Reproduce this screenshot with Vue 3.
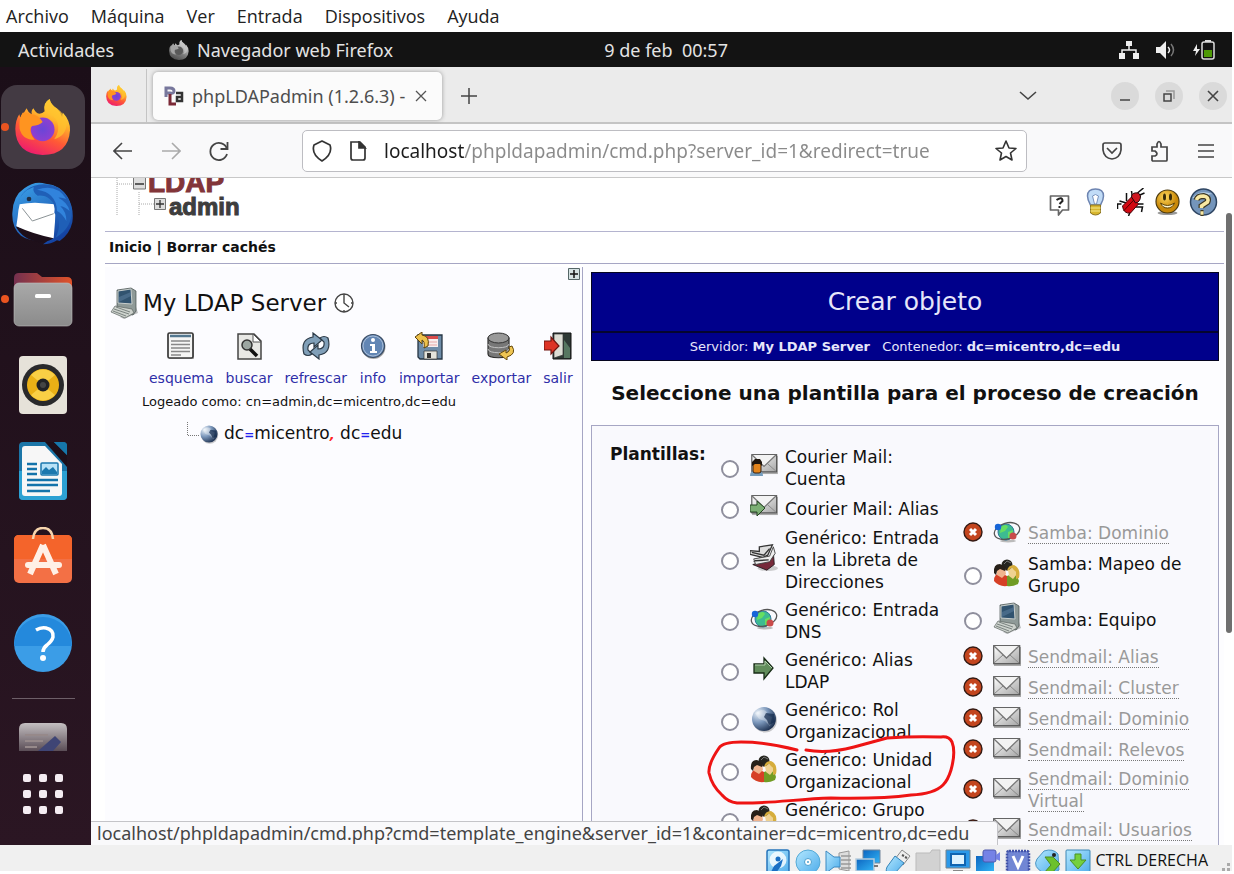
<script setup>
import { ref } from 'vue'

const menus = ['Archivo', 'Máquina', 'Ver', 'Entrada', 'Dispositivos', 'Ayuda']
const url = ref('localhost/phpldapadmin/cmd.php?server_id=1&redirect=true')

const dock = [
  { id: 'firefox', label: 'Firefox', active: true, running: true, size: 56 },
  { id: 'thunderbird', label: 'Thunderbird', size: 64 },
  { id: 'files', label: 'Archivos', running: true, size: 60 },
  { id: 'rhythmbox', label: 'Rhythmbox', size: 60 },
  { id: 'writer', label: 'Writer', size: 60 },
  { id: 'software', label: 'Software', size: 60 },
  { id: 'help', label: 'Ayuda', size: 60 }
]

const helpers = [
  { id: 'speech', label: 'Solicitar' },
  { id: 'bulb', label: 'Sugerencia' },
  { id: 'bug', label: 'Error' },
  { id: 'smile', label: 'Donar' },
  { id: 'question', label: 'Ayuda' }
]

const actions = [
  { id: 'schema', label: 'esquema' },
  { id: 'search', label: 'buscar' },
  { id: 'refresh', label: 'refrescar' },
  { id: 'info', label: 'info' },
  { id: 'import', label: 'importar' },
  { id: 'export', label: 'exportar' },
  { id: 'logout', label: 'salir' }
]

const leftTemplates = [
  { icon: 'mail-user', text: 'Courier Mail: Cuenta' },
  { icon: 'mail-arrow', text: 'Courier Mail: Alias' },
  { icon: 'book', text: 'Genérico: Entrada en la Libreta de Direcciones' },
  { icon: 'orbit', text: 'Genérico: Entrada DNS' },
  { icon: 'arrow', text: 'Genérico: Alias LDAP' },
  { icon: 'globe', text: 'Genérico: Rol Organizacional' },
  { icon: 'people', text: 'Genérico: Unidad Organizacional' },
  { icon: 'people', text: 'Genérico: Grupo', tall: true }
]

const rightTemplates = [
  { icon: 'orbit', text: 'Samba: Dominio', off: true },
  { icon: 'people', text: 'Samba: Mapeo de Grupo' },
  { icon: 'computer', text: 'Samba: Equipo' },
  { icon: 'mail', text: 'Sendmail: Alias', off: true },
  { icon: 'mail', text: 'Sendmail: Cluster', off: true },
  { icon: 'mail', text: 'Sendmail: Dominio', off: true },
  { icon: 'mail', text: 'Sendmail: Relevos', off: true },
  { icon: 'mail', text: 'Sendmail: Dominio Virtual', off: true },
  { icon: 'mail', text: 'Sendmail: Usuarios', off: true }
]

const devices = ['disk', 'cd', 'audio', 'network', 'usb', 'folder', 'display', 'record', 'cpu', 'mouse', 'keyboard']
</script>

<template>
  <div class="vm">
    <svg class="sprites" aria-hidden="true">
      <defs>
        <linearGradient id="g-fox" x1="0.8" y1="0" x2="0.35" y2="1">
          <stop offset="0" stop-color="#fff04a" /><stop offset="0.35" stop-color="#ffb52b" />
          <stop offset="0.65" stop-color="#ff5a35" /><stop offset="1" stop-color="#ee1d6d" />
        </linearGradient>
        <radialGradient id="g-purple"><stop offset="0" stop-color="#6a45d8" /><stop offset="1" stop-color="#8f3fd0" /></radialGradient>
        <linearGradient id="g-bird" x1="0" y1="0" x2="0.6" y2="1"><stop offset="0" stop-color="#3ea8ee" /><stop offset="1" stop-color="#1443a2" /></linearGradient>
        <linearGradient id="g-grey" x1="0" y1="0" x2="0" y2="1"><stop offset="0" stop-color="#a9a9a9" /><stop offset="1" stop-color="#8b8b8b" /></linearGradient>
        <linearGradient id="g-folder"><stop offset="0" stop-color="#74304f" /><stop offset="1" stop-color="#e0532a" /></linearGradient>
        <linearGradient id="g-fade" x1="0" y1="0" x2="0" y2="1"><stop offset="0" stop-color="#c4bfc1" /><stop offset="1" stop-color="#5a4d56" /></linearGradient>
        <linearGradient id="g-env" x1="0" y1="0" x2="1" y2="1"><stop offset="0" stop-color="#ffffff" /><stop offset="1" stop-color="#a5a5a5" /></linearGradient>
        <radialGradient id="g-globe" cx="0.25" cy="0.25" r="0.9"><stop offset="0" stop-color="#eef4fa" /><stop offset="0.45" stop-color="#7b97bb" /><stop offset="1" stop-color="#0f2140" /></radialGradient>
        <radialGradient id="g-smile" cx="0.4" cy="0.3"><stop offset="0" stop-color="#ffd85c" /><stop offset="1" stop-color="#c98909" /></radialGradient>
        <linearGradient id="g-blue" x1="0" y1="0" x2="1" y2="1"><stop offset="0" stop-color="#b4e8ff" /><stop offset="1" stop-color="#4cabea" /></linearGradient>
        <linearGradient id="g-deep" x1="0" y1="0" x2="1" y2="1"><stop offset="0" stop-color="#0d65c0" /><stop offset="1" stop-color="#32b4f5" /></linearGradient>
      </defs>

      <symbol id="firefox" viewBox="0 0 168 170">
        <path fill="url(#g-fox)" d="M27 40l7-12q4 12 16 19q-3-12 5-19q6 14 18 17q10-2 16-8q-6-25 15-37q4 18 22 29q12 10 16 26l2-14q23 25 22 54q-5 75-83 75Q1 166 0 91Q1 62 12 46l3 10q4-9 12-16z" />
        <circle cx="83" cy="92" r="36" fill="url(#g-purple)" />
        <path fill="#ff9420" d="M22 42q14-4 27 4q20 0 34 24q-10 10-32 12q-8 6-4 20q2 12 12 22q-38 0-46-34Q10 62 22 42z" />
        <path fill="#ffc22d" d="M90 38q26 6 38 34q8 26-10 50q36-10 38-48q-6-30-30-46q-18-10-22-28q-20 14-14 38z" opacity=".75" />
      </symbol>
      <symbol id="thunderbird" viewBox="0 0 192 192">
        <path fill="url(#g-bird)" d="M40 22Q70-2 104 8q44 4 66 40q20 34 14 76q-8 36-38 56l-8-2q-18 12-42 12l14-10Q54 182 30 164Q2 140 4 96Q6 44 40 22z" />
        <path fill="#1d0f1a" d="M14 136l114 34q-12 12-30 10l-12 4Q34 176 14 136z" />
        <path fill="#fff" d="M26 70q22-4 46-5l60 5q2 26 0 52l-4 50q-60-12-112-36l4-28q2-24 6-38z" />
        <path d="M34 82l30 38 64-22" fill="none" stroke="#8b9396" stroke-width="3" />
        <path fill="#1f5fb7" d="M20 66q12-36 48-48q-4 16 12 26q22-2 36 10q18 14 14 42q26 26 4 74q52-30 48-88Q164 8 96 10Q40 12 20 66z" />
        <path fill="#3183dc" d="M78 26q58-20 88 28q-16-6-24-4q28 14 34 40q-16-14-28-14q18 16 18 44q-12-22-28-30Q136 34 78 26z" />
        <circle cx="54" cy="54" r="7" fill="#203047" />
      </symbol>
      <symbol id="files" viewBox="0 0 60 60">
        <path fill="url(#g-folder)" d="M1 9q0-5 5-5h18l5 4h25q5 0 5 5v18H1z" />
        <rect x="1" y="14" width="58" height="43" rx="5" fill="url(#g-grey)" stroke="#c0c0c0" stroke-width=".6" />
        <rect x="22" y="25" width="16" height="4" rx="1.5" fill="#fff" />
      </symbol>
      <symbol id="rhythmbox" viewBox="0 0 60 60">
        <rect x="6" y="1" width="48" height="58" rx="4" fill="#e6e2d9" />
        <circle cx="30" cy="30" r="21" fill="#29292b" /><circle cx="30" cy="30" r="16" fill="#eab016" />
        <path d="M30 30L18 20a16 16 0 0 1 24 0zM30 30l12 10a16 16 0 0 1-24 0z" fill="#f9cf45" />
        <circle cx="30" cy="30" r="6.500" fill="#222225" /><circle cx="30" cy="30" r="3" fill="#444" />
      </symbol>
      <symbol id="writer" viewBox="0 0 60 60">
        <path fill="#1b76a8" d="M10 1h40q4 0 4 4v50q0 4-4 4H10q-4 0-4-4V5q0-4 4-4z" />
        <path fill="#2ca1d3" d="M6 30h48v25q0 4-4 4H10q-4 0-4-4z" />
        <path fill="#f7f7f7" d="M12 5h20l17 18v29q0 3-3 3H12q-3 0-3-3V8q0-3 3-3z" />
        <path fill="#1e0f19" d="M32 1h9l13 13v12z" /><path fill="#1677aa" d="M41 1h9q4 0 4 4v9z" />
        <path d="M14 23h10M14 28h10M14 33h10M14 39h31M14 44h31M14 50h23" stroke="#1473aa" stroke-width="2.500" />
        <rect x="28" y="22" width="17" height="12" rx="1" fill="#b8e2f7" stroke="#1b78ae" stroke-width="1.500" />
        <path fill="#1c78ae" d="M29 33v-3l4-4 3 3 4-3 4 5v2z" />
      </symbol>
      <symbol id="software" viewBox="0 0 60 60">
        <rect x="1" y="8" width="58" height="48" rx="5" fill="#f37045" /><path d="M1 32V13q0-5 5-5h48q5 0 5 5v19z" fill="#f4642b" />
        <path d="M20 12Q21 1 30 1t10 11" fill="none" stroke="#f6d4ad" stroke-width="2.500" />
        <path d="M30 18L17 47M30 18l13 29" stroke="#fff0e6" stroke-width="6" fill="none" /><path d="M15 38h31" stroke="#fff0e6" stroke-width="6" stroke-linecap="round" />
      </symbol>
      <symbol id="help" viewBox="0 0 60 60">
        <circle cx="30" cy="30" r="29" fill="#3b9de7" /><path d="M1 33a29 29 0 0 1 58 0z" fill="#2489dc" />
        <path d="M23 17q5-3 10-2 8 2 7 9-1 4-6 8-4 3-4 7" fill="none" stroke="#fff" stroke-width="3.500" /><circle cx="30" cy="45" r="3" fill="#fff" />
      </symbol>

      <symbol id="computer" viewBox="0 0 28 32">
        <path fill="#2a3130" opacity=".3" d="M10 30l16-6v-4l2 6-14 6z" />
        <path fill="#8f9a98" stroke="#444d4c" stroke-width=".7" d="M7 3l14-2 5 3v20l-3 4-16-7z" />
        <path fill="#31536f" stroke="#c8cecc" d="M8 4l13-2 1 15-14-1z" /><path d="M9 10l12-5v4L9 15z" fill="#58799a" opacity=".6" />
        <path fill="#cdd2cd" stroke="#5b6461" stroke-width=".7" d="M5 19l17 3 2 4-9 5-14-6z" />
        <path d="M4 22l15 5M6 20l14 5M3 24l13 5" stroke="#7b8481" />
      </symbol>
      <symbol id="schema" viewBox="0 0 28 28">
        <rect x="2" y="2" width="25" height="25" fill="#bbb" /><rect x="1" y="1" width="25" height="25" rx="1.500" fill="#f5f5f4" stroke="#383838" stroke-width="1.700" />
        <path d="M3 4h21" stroke="#527790" stroke-width="2.500" /><path d="M4 9h19M4 12.500h19M4 16h19M4 19.500h19M4 23h10" stroke="#888" stroke-width="1.500" />
      </symbol>
      <symbol id="search" viewBox="0 0 28 28">
        <path d="M3 2h16l7 7v18H3z" fill="#e8e8e5" stroke="#444" stroke-width="1.500" /><path d="M18 2v8h8z" fill="#fff" stroke="#555" />
        <path d="M14 16l8 8" stroke="#111" stroke-width="3.500" /><circle cx="12" cy="13" r="5" fill="#9ca6a1" stroke="#333" stroke-width="1.500" />
      </symbol>
      <symbol id="refresh" viewBox="0 0 28 28">
        <path id="swirl" fill="#809fb8" stroke="#2c3b48" stroke-width="1.200" d="M2 22Q-2 7 11 5V1l9 7-8 7v-4q-7 0-6 7l4 4q-4 3-8 0z" />
        <use href="#swirl" transform="rotate(180 14 14)" />
      </symbol>
      <symbol id="info" viewBox="0 0 28 28">
        <circle cx="14.500" cy="15" r="12" fill="#aaa" /><circle cx="14" cy="14" r="11.500" fill="#6286b4" stroke="#3b4c63" stroke-width="1.200" /><circle cx="14" cy="14" r="10" fill="none" stroke="#a9bdd7" />
        <circle cx="14" cy="8" r="2" fill="#fff" /><path d="M11 12h5v7h2v2h-7v-2h2v-5h-2z" fill="#fff" />
      </symbol>
      <symbol id="import" viewBox="0 0 28 28">
        <path fill="#6e8ca8" stroke="#253443" stroke-width="1.300" d="M3 3h24v24H5l-2-2z" /><path fill="#f7eeee" d="M8 4h15v11H8z" /><path fill="#d94c4c" d="M8 4h15v3H8z" /><path d="M9 10h13M9 13h13" stroke="#e6a7a7" />
        <path d="M9 19h13v8H9z" fill="#e4e4dc" stroke="#333" stroke-width=".7" /><path d="M12 21h4v5h-4z" fill="#333" />
        <path fill="#edc14b" stroke="#5b420e" d="M0 5l7-5v3q8 1 6 11l-4 2q1-7-2-8v4z" />
      </symbol>
      <symbol id="export" viewBox="0 0 28 28">
        <path fill="#777" stroke="#2d2d2d" stroke-width="1.200" d="M1 6v16c0 5 21 5 21 0V6z" /><ellipse cx="11.500" cy="6" rx="10.500" ry="5" fill="#999" stroke="#333" />
        <path d="M1 12c0 5 21 5 21 0M1 17c0 5 21 5 21 0" fill="none" stroke="#c2c2c2" />
        <path fill="#efc553" stroke="#664a0e" d="M25 14q5 8-5 11v3l-8-6 7-4v3q5-2 3-6z" />
      </symbol>
      <symbol id="logout" viewBox="0 0 28 28">
        <path fill="#2e3935" stroke="#111" d="M9 1h18v26H9z" /><path fill="#dcddd4" stroke="#333" stroke-width=".7" d="M10 2h9v21l-9 3z" /><path d="M20 8l6 8v10h-6z" fill="#567660" />
        <path fill="#dd3426" stroke="#701510" stroke-width="1.200" d="M0 9h7V5l8 9-8 8v-4H0z" />
      </symbol>

      <symbol id="globe" viewBox="0 0 28 28"><circle cx="15" cy="15.500" r="12" fill="#000" opacity=".2" /><circle cx="14" cy="14" r="12" fill="url(#g-globe)" /><path d="M11 5q7 0 6 5l5 2-2 9-5-5-6-2-4-6z" fill="#fff" opacity=".3" /><path d="M16 8l8 1 1 8-6 3-2-5-3-3z" fill="#13294b" opacity=".7" /></symbol>
      <symbol id="mail" viewBox="0 0 28 22"><rect x="1" y="2" width="27" height="19" fill="#aaa" /><rect x=".7" y=".7" width="26" height="18" fill="url(#g-env)" stroke="#555" stroke-width="1.200" /><path d="M1 18l9-8M26 18l-9-8" stroke="#888" /><path d="M1 1l12.500 12L26 1" fill="#f3f3f3" stroke="#777" stroke-width="1.300" /></symbol>
      <symbol id="mail-user" viewBox="0 0 28 24"><use href="#mail" x="1" width="27" height="21" /><path d="M0 22q0-5 4-5h5q4 0 4 5z" fill="#739cbd" /><rect x="3" y="8" width="8" height="11" rx="2" fill="#e2841c" stroke="#3a2415" /><path d="M2 12V8l3-3h5l2 3v4l-2-2H5z" fill="#20170f" /></symbol>
      <symbol id="mail-arrow" viewBox="0 0 28 24"><use href="#mail" x="1" width="27" height="21" /><path d="M0 10h7V6l8 7-8 8v-4H0z" fill="#7caf74" stroke="#244522" /></symbol>
      <symbol id="arrow" viewBox="0 0 28 28"><path d="M4 9h10V3l9 10-9 11v-6H4z" fill="#618c5b" stroke="#172b16" stroke-width="1.300" /><path d="M5 10h10V6l7 7" fill="none" stroke="#b1ceac" /></symbol>
      <symbol id="orbit" viewBox="0 0 28 24"><ellipse cx="15" cy="21" rx="8" ry="1.500" fill="#bbb" /><circle cx="13" cy="12" r="8" fill="#3dbb91" stroke="#317a9c" /><path d="M8 7q5-4 7 0l-3 4-5 2zM15 12l5-2-1 7-4 2z" fill="#67de61" /><ellipse cx="14" cy="11" rx="13" ry="8" fill="none" stroke="#555" stroke-width="1.300" transform="rotate(-16 14 11)" /><circle cx="5" cy="7" r="3.200" fill="#1665d8" /><circle cx="20" cy="16" r="3.500" fill="#c94a4a" /></symbol>
      <symbol id="people" viewBox="0 0 28 28">
        <circle cx="14" cy="6" r="5.500" fill="#25251f" /><path d="M11 5l3-3 4 2" fill="none" stroke="#777" />
        <path d="M1 22q0-8 7-8l6 3v10q-8 1-13-5z" fill="#d64026" /><path d="M14 27V17q10-5 12 5l-1 3q-6 3-11 2z" fill="#719c24" />
        <path d="M3 9h9l1 6-4 4-5-3z" fill="#f0b48e" /><path d="M15 11l6-2 3 6-4 5-4-3z" fill="#efd291" />
        <path d="M1 14Q0 5 7 5l6 3-1 4-5-2-3 2-1 4z" fill="#272018" /><path d="M14 12q1-6 7-6 7 3 5 13l-3 1 0-7-4-4z" fill="#d6ad3c" />
      </symbol>
      <symbol id="book" viewBox="0 0 30 28"><ellipse cx="19" cy="25" rx="11" ry="3" fill="#aaa" opacity=".6" /><path d="M3 21l15-4 7-9 1 13-8 6z" fill="#76293a" stroke="#261b20" /><path d="M10 2l14-2-5 11-15 7 8-5-12-3V6l10 1z" fill="#ddd" stroke="#333" stroke-width="1.400" /><path d="M4 15l17-3 4-10 2 7-6 9-15 3z" fill="#eee" stroke="#444" /><path d="M2 8l13 3 6-7M5 17l15-1" fill="none" stroke="#333" stroke-width="1.500" /></symbol>
      <symbol id="off" viewBox="0 0 20 20"><circle cx="10" cy="10" r="9" fill="#c3451e" stroke="#341a13" stroke-width="1.400" /><path d="M7 7l6 6M13 7l-6 6" stroke="#fff" stroke-width="3" /></symbol>

      <symbol id="speech" viewBox="0 0 28 28"><path d="M5 8h18v14h-6l-4 5v-5H5z" fill="#fff" stroke="#666" stroke-width="1.700" stroke-linejoin="round" /><path d="M11 12q6-4 6 1-2 2-3 3" fill="none" stroke="#222" stroke-width="2" /><path d="M13 19h2" stroke="#222" stroke-width="2" /></symbol>
      <symbol id="bulb" viewBox="0 0 28 28"><path d="M9 17Q6 12 6 8q0-7 8-7t8 7q0 4-3 9z" fill="#c1dcf7" stroke="#6d84b1" stroke-width="1.500" /><path d="M11 8q3-3 6 0l-2 8h-2z" fill="#fff" stroke="#7993bd" /><path d="M9 17h10v8q-5 4-10 0z" fill="#d8b62e" stroke="#8c7420" /><path d="M9 20h10M9 23h10" stroke="#f5ea8c" /></symbol>
      <symbol id="bug" viewBox="0 0 28 28"><path d="M2 13l7 2M9 5v8M14 3l1 7M20 5l6-5M20 8l7-3M20 16h6M18 19h7l-1 5M4 16H0v5M13 23l-2 5" stroke="#111" stroke-width="1.500" fill="none" /><path d="M5 18l9-9 7 7-8 9q-7 1-8-7z" fill="#d20812" stroke="#470207" /><path d="M6 23l14-15" stroke="#500" /><path d="M14 9q0-5 7-4l2 3q0 6-5 7z" fill="#cf1720" stroke="#22090b" /></symbol>
      <symbol id="smile" viewBox="0 0 28 28"><ellipse cx="14" cy="25" rx="10" ry="2" fill="#999" /><circle cx="14" cy="13.500" r="11.500" fill="url(#g-smile)" stroke="#4b3a10" stroke-width="1.200" /><ellipse cx="11" cy="9" rx="1.500" ry="3.500" fill="#382b09" /><ellipse cx="17" cy="9" rx="1.500" ry="3.500" fill="#382b09" /><path d="M7 15q7 5 14 0-2 5-7 5t-7-5z" fill="#fff6cd" stroke="#5c4308" /></symbol>
      <symbol id="question" viewBox="0 0 28 28"><circle cx="14" cy="14" r="13" fill="#7495bb" stroke="#2e4562" stroke-width="1.500" /><path d="M3 10Q10 1 23 6q-6 0-9 5z" fill="#bdd4ea" /><path d="M7 12q1-4 7-4 6 1 4 6l-6 4v2M11 25h3" fill="none" stroke="#3c3620" stroke-width="6" /><path d="M7 12q1-4 7-4 6 1 4 6l-6 4v2M11 25h3" fill="none" stroke="#f9e9a3" stroke-width="3.500" /></symbol>

      <symbol id="disk" viewBox="0 0 26 26"><rect x="2" y="1" width="22" height="25" rx="2" fill="url(#g-blue)" stroke="#2574bb" stroke-width="1.500" /><circle cx="13" cy="11" r="8.500" fill="#fff" opacity=".8" /><circle cx="13" cy="10" r="2.500" fill="#1a6fc4" /><path d="M18 10l-2 7-5 7-5-1 3-6z" fill="#1a6fc4" /></symbol>
      <symbol id="cd" viewBox="0 0 26 26"><circle cx="13" cy="13" r="12" fill="url(#g-blue)" stroke="#55aad6" /><circle cx="13" cy="13" r="3.500" fill="#fff" stroke="#4ca0cf" /><circle cx="13" cy="13" r="1" fill="#4ca0cf" /></symbol>
      <symbol id="audio" viewBox="0 0 26 26"><path d="M14 4l10-2v20l-10-2z" fill="#ddd" stroke="#999" /><path d="M16 7h10M16 11h10M16 15h10M16 19h10" stroke="#999" stroke-width="1.500" /><path d="M1 2l8 6h6v10H9l-8 6z" fill="url(#g-blue)" stroke="#3a88c0" /></symbol>
      <symbol id="network" viewBox="0 0 26 26"><path d="M8 1h17v13H8z" fill="url(#g-deep)" stroke="#72869c" /><path d="M1 10h18v12H1z" fill="url(#g-deep)" stroke="#b7ccdc" stroke-width="1.500" /><path d="M6 25h9M19 17h4" stroke="#777" stroke-width="2" /></symbol>
      <symbol id="usb" viewBox="0 0 26 26"><path d="M17 1l8 6-7 9-8-6z" fill="#eee" stroke="#888" /><path d="M17 6l2 1M20 8l2 1" stroke="#555" stroke-width="2" /><path d="M10 7l9 7-9 10q-3 3-7 1-3-2-1-7z" fill="url(#g-blue)" stroke="#3484b9" /></symbol>
      <symbol id="folder" viewBox="0 0 26 26"><path d="M1 4h14l2-3h8v22H1z" fill="#d2d2d2" stroke="#bbb" /></symbol>
      <symbol id="display" viewBox="0 0 26 26"><path d="M1 1h24v18H1z" fill="#2b99e9" stroke="#76848e" /><path d="M6 5h14v11H6z" fill="#ddf3ff" stroke="#1065b1" stroke-width="2" /><path d="M8 22h10M5 25h16" stroke="#888" stroke-width="2" /></symbol>
      <symbol id="record" viewBox="0 0 26 26"><path d="M1 7h18v15H1z" fill="url(#g-deep)" /><rect x="8" y="1" width="13" height="12" rx="2" fill="#7582e6" stroke="#4e59ad" /><path d="M21 6l4-3v9l-4-2z" fill="#7582e6" /><path d="M5 25h12" stroke="#777" stroke-width="2" /></symbol>
      <symbol id="cpu" viewBox="0 0 26 26"><rect x="2" y="2" width="22" height="22" rx="2" fill="#7186d4" stroke="#4051a6" stroke-width="2.500" stroke-dasharray="2 1" /><path d="M8 7l5 11 5-11" fill="none" stroke="#fff" stroke-width="3" /></symbol>
      <symbol id="mouse" viewBox="0 0 26 26"><path d="M9 2q9-3 14 3l1 16q-8 6-15 3Q-3 18 2 10z" fill="url(#g-blue)" stroke="#4e96c4" /><path d="M10 8h8l7 7-8 9h-8l7-8z" fill="#6cc12c" stroke="#4b8c24" /><circle cx="19" cy="6" r="2" fill="#222" /></symbol>
      <symbol id="keyboard" viewBox="0 0 26 26"><rect x="1" y="1" width="24" height="24" rx="1" fill="url(#g-blue)" stroke="#3d86b5" /><path d="M10 5h6v6h5l-8 9-8-9h5z" fill="#75d03d" stroke="#489025" /></symbol>
    </svg>

    <nav class="host-menu">
      <button v-for="m in menus" :key="m" type="button">{{ m }}</button>
    </nav>

    <div class="guest">
      <header class="topbar">
        <div class="top-left">
          <button type="button">Actividades</button>
          <button type="button" class="app-name">
            <svg class="tiny-fox" width="20" height="20"><use href="#firefox" /></svg>Navegador web Firefox
          </button>
        </div>
        <button type="button" class="clock">9 de feb&nbsp; 00:57</button>
        <div class="tray">
          <svg width="20" height="18" viewBox="0 0 20 18" fill="#eee"><path d="M7 0h6v5H7zM0 12h6v6H0zM14 12h6v6h-6z" /><path d="M10 5v4M3 13V9h14v4" fill="none" stroke="#eee" stroke-width="1.500" /></svg>
          <svg width="20" height="18" viewBox="0 0 20 18"><path d="M0 6h4l6-6v18l-6-6H0z" fill="#eee" /><path d="M12 6q3 3 0 6" fill="none" stroke="#eee" stroke-width="1.500" /><path d="M15 3q5 6 0 12" fill="none" stroke="#777" stroke-width="1.500" /></svg>
          <svg width="22" height="20" viewBox="0 0 22 20"><path d="M4 4L0 11h3l-1 5 5-7H4z" fill="#eee" /><rect x="9" y="2" width="12" height="17" rx="2" fill="none" stroke="#ddd" stroke-width="1.500" /><path d="M12 1h6" stroke="#ddd" stroke-width="2" /><path d="M11 10h8v7h-8z" fill="#4e9a06" /></svg>
        </div>
      </header>

      <div class="desktop">
        <aside class="dock">
          <button v-for="d in dock" :key="d.id" type="button" class="dock-item" :class="{ active: d.active, running: d.running }" :aria-label="d.label">
            <svg :width="d.size" :height="d.size"><use :href="'#' + d.id" /></svg>
          </button>
          <hr />
          <button type="button" class="dock-cut" aria-label="Editor de texto">
            <svg width="48" height="28" viewBox="0 0 48 28"><path d="M0 28V6q0-6 6-6h36q6 0 6 6v22z" fill="url(#g-fade)" /><path d="M6 12h23M6 18h18M6 24h12" stroke="#96898a" stroke-width="2" /><path d="M19 28l17-15 6 6-8 9z" fill="#3f4575" /></svg>
          </button>
          <button type="button" class="dock-grid" aria-label="Mostrar aplicaciones"><i v-for="n in 9" :key="n"></i></button>
        </aside>

        <div class="browser">
          <div class="tabs">
            <button type="button" class="pinned" aria-label="Firefox"><svg width="21" height="21"><use href="#firefox" /></svg></button>
            <div class="tab">
              <svg width="20" height="20" viewBox="0 0 20 20" fill="none" stroke-width="3"><path d="M2 11V2h4q4 0 4 3T6 7H3" stroke="#77779c" /><path d="M6 8v10h6" stroke="#7b2936" /><path d="M12 7h6v8h-5v-4h5" stroke="#333" stroke-width="2.500" /></svg>
              <span class="tab-title">phpLDAPadmin (1.2.6.3) -</span>
              <button type="button" aria-label="Cerrar pestaña"><svg width="12" height="12" viewBox="0 0 12 12" stroke="#555" stroke-width="1.300"><path d="M1 1l10 10M11 1L1 11" /></svg></button>
            </div>
            <button type="button" class="plus" aria-label="Nueva pestaña"><svg width="16" height="16" viewBox="0 0 16 16" stroke="#444" stroke-width="1.500"><path d="M8 0v16M0 8h16" /></svg></button>
            <div class="win">
              <button type="button" class="all-tabs" aria-label="Listar pestañas"><svg width="18" height="10" viewBox="0 0 18 10" fill="none" stroke="#444" stroke-width="1.600"><path d="M1 1l8 7 8-7" /></svg></button>
              <button type="button" class="round" aria-label="Minimizar"><svg width="12" height="12" viewBox="0 0 12 12"><path d="M1 10h10" stroke="#444" stroke-width="1.500" /></svg></button>
              <button type="button" class="round" aria-label="Restaurar"><svg width="12" height="12" viewBox="0 0 12 12" fill="none" stroke="#444" stroke-width="1.500"><path d="M1 4h7v7H1z" /><path d="M3 1h8v8" stroke="#999" /></svg></button>
              <button type="button" class="round" aria-label="Cerrar"><svg width="12" height="12" viewBox="0 0 12 12" stroke="#444" stroke-width="1.600"><path d="M1 1l10 10M11 1L1 11" /></svg></button>
            </div>
          </div>

          <div class="toolbar">
            <div class="nav">
              <button type="button" aria-label="Atrás"><svg width="20" height="18" viewBox="0 0 20 18" fill="none" stroke="#444" stroke-width="1.600"><path d="M19 9H1M9 1L1 9l8 8" /></svg></button>
              <button type="button" aria-label="Adelante"><svg width="20" height="18" viewBox="0 0 20 18" fill="none" stroke="#aaa" stroke-width="1.600"><path d="M1 9h18M11 1l8 8-8 8" /></svg></button>
              <button type="button" aria-label="Recargar"><svg width="20" height="20" viewBox="0 0 20 20" fill="none" stroke="#444" stroke-width="1.800"><path d="M18 8a8.500 8.500 0 1 0 0 5" /><path d="M18.500 1v7h-7" /></svg></button>
            </div>
            <div class="urlbar">
              <svg width="20" height="22" viewBox="0 0 20 22" fill="none" stroke="#333" stroke-width="1.700"><path d="M10 1l8 4q3 9-8 16Q-1 14 2 5z" stroke-linejoin="round" /></svg>
              <svg width="18" height="20" viewBox="0 0 18 20" fill="none" stroke="#333" stroke-width="1.700"><path d="M2 1h9l5 5v11q0 2-2 2H4q-2 0-2-2z" /><path d="M10 1v6h6z" fill="#333" /></svg>
              <input v-model="url" type="text" aria-label="Dirección" />
              <button type="button" aria-label="Añadir a marcadores"><svg width="22" height="22" viewBox="0 0 22 22" fill="none" stroke="#333" stroke-width="1.600" stroke-linejoin="round"><path d="M11 1l3 7 7 .5-5.500 4.500L17 20l-6-3.500L5 20l1.500-7L1 8.500 8 8z" /></svg></button>
            </div>
            <div class="extras">
              <button type="button" aria-label="Pocket"><svg width="20" height="18" viewBox="0 0 20 18" fill="none" stroke="#444" stroke-width="1.700"><path d="M3 1h14q2 0 2 2v5q-1 8-9 9-8-1-9-9V3q0-2 2-2z" /><path d="M5 6l5 5 5-5" /></svg></button>
              <button type="button" aria-label="Extensiones"><svg width="20" height="22" viewBox="0 0 20 22" fill="none" stroke="#444" stroke-width="1.700"><path d="M2 7h5V4q2-5 4 0v3h6v13q0 1-1 1H3q-1 0-1-1v-4h3q4-2 0-5H2z" /></svg></button>
              <button type="button" aria-label="Menú"><svg width="16" height="14" viewBox="0 0 16 14" stroke="#444" stroke-width="1.700"><path d="M0 1h16M0 7h16M0 13h16" /></svg></button>
            </div>
          </div>

          <main class="page">
            <div class="logo-row">
              <svg class="logo" width="150" height="44" viewBox="0 0 150 44">
                <path d="M12 0v38M34 14v24M12 6h16M34 26h16" fill="none" stroke="#aaa" stroke-dasharray="1 1" />
                <text class="logo-big" x="43" y="14">LDAP</text>
                <text class="logo-small" x="64" y="37">admin</text>
                <path d="M28.500-1h12v12h-12zM49.500 20.500h11v11h-11z" fill="#ddd" stroke="#777" />
                <path d="M30 6h9M51 26h8M55 22v8" stroke="#333" stroke-width="1.300" />
              </svg>
              <div class="helpers">
                <a v-for="h in helpers" :key="h.id" href="#" :aria-label="h.label"><svg width="29" height="28"><use :href="'#' + h.id" /></svg></a>
              </div>
            </div>
            <nav class="crumbs"><a href="#">Inicio</a> | <a href="#">Borrar cachés</a></nav>

            <div class="columns">
              <section class="tree">
                <button type="button" class="expand" aria-label="Expandir"><svg width="12" height="12" viewBox="0 0 12 12"><path d="M.5.500h11v11H.5z" fill="#d5e2e2" stroke="#566" /><path d="M6 2v8M2 6h8" stroke="#111" stroke-width="1.500" /></svg></button>
                <h2>
                  <svg width="28" height="32"><use href="#computer" /></svg><span>My LDAP Server</span>
                  <svg class="history" width="20" height="20" viewBox="0 0 20 20" fill="none" stroke="#444" stroke-width="1.400"><circle cx="10" cy="10" r="9" fill="#fff" /><path d="M10 3v7l5 4M10 1v2M10 17v2M1 10h2M17 10h2" /></svg>
                </h2>
                <div class="actions">
                  <a v-for="a in actions" :key="a.id" href="#"><svg width="28" height="28"><use :href="'#' + a.id" /></svg>{{ a.label }}</a>
                </div>
                <p class="logged">Logeado como: cn=admin,dc=micentro,dc=edu</p>
                <a href="#" class="node">
                  <svg width="12" height="24" viewBox="0 0 12 24"><path d="M.5 0v13.500H12" fill="none" stroke="#777" stroke-dasharray="1 1" /></svg>
                  <svg width="20" height="20"><use href="#globe" /></svg>
                  <span>dc<b>=</b>micentro<em>,</em> dc<b>=</b>edu</span>
                </a>
              </section>

              <section class="create">
                <header class="banner">
                  <h1>Crear objeto</h1>
                  <p>Servidor: <b>My LDAP Server</b>&nbsp;&nbsp; Contenedor: <b>dc=micentro,dc=edu</b></p>
                </header>
                <h3>Seleccione una plantilla para el proceso de creación</h3>
                <form class="templates" @submit.prevent>
                  <strong>Plantillas:</strong>
                  <div class="list">
                    <label v-for="t in leftTemplates" :key="t.text" class="row" :class="{ tall: t.tall }">
                      <input type="radio" name="template" />
                      <svg class="pic" width="28" height="28"><use :href="'#' + t.icon" /></svg>
                      <span>{{ t.text }}</span>
                    </label>
                  </div>
                  <div class="list second">
                    <template v-for="t in rightTemplates" :key="t.text">
                      <div v-if="t.off" class="row off">
                        <svg width="20" height="20"><use href="#off" /></svg>
                        <svg width="28" height="24"><use :href="'#' + t.icon" /></svg>
                        <span><abbr>{{ t.text }}</abbr></span>
                      </div>
                      <label v-else class="row">
                        <input type="radio" name="template" />
                        <svg class="pic" width="28" height="32"><use :href="'#' + t.icon" /></svg>
                        <span>{{ t.text }}</span>
                      </label>
                    </template>
                  </div>
                  <svg class="scribble" width="260" height="80" viewBox="0 0 260 80" fill="none" stroke="#ee1414" stroke-width="3" stroke-linecap="round" stroke-linejoin="round">
                    <path d="M95 18Q65 10 39 10Q21 10 17 16Q6 32 7 41Q10 54 20 63Q26 70 35 71C65 72 95 67 129 66Q180 67 209 63Q232 62 241 53Q246 48 249 38Q254 20 250 10Q247 4 239 5Q212 4 185 6L152 15Q125 22 104 18" />
                  </svg>
                </form>
              </section>
            </div>

            <div class="scrollbar"></div>
            <div class="link-status">localhost/phpldapadmin/cmd.php?cmd=template_engine&amp;server_id=1&amp;container=dc=micentro,dc=edu</div>
          </main>
        </div>
      </div>
    </div>

    <footer class="host-status">
      <svg v-for="d in devices" :key="d" width="26" height="26"><use :href="'#' + d" /></svg>
      <span>CTRL DERECHA</span>
      <svg class="grip" width="10" height="10" viewBox="0 0 10 10" fill="#aaa"><path d="M7 0h3v3H7zM7 5h3v3H7zM2 5h3v3H2z" /></svg>
    </footer>
  </div>
</template>

<style>
body { margin: 0; background: #fff; }
</style>

<style scoped>
.vm { display: flex; flex-direction: column; box-sizing: border-box; height: 100vh; padding: 0 2px 3px 0; overflow: hidden; font-family: "Noto Sans", sans-serif; color: #222; }
.vm svg { flex: none; display: block; }
.sprites { position: absolute; width: 0; height: 0; }
button { border: 0; background: none; padding: 0; margin: 0; font: inherit; color: inherit; display: flex; align-items: center; }
a { color: inherit; text-decoration: none; }
h1, h2, h3, p { margin: 0; font-weight: normal; }

.host-menu { display: flex; gap: 22px; flex: none; height: 32px; padding-left: 6px; font: 18px "Open Sans", sans-serif; }
.guest { flex: 1; min-height: 0; display: flex; flex-direction: column; }
.topbar { flex: none; height: 35px; background: #131313; color: #e4e4e4; display: grid; grid-template-columns: 585fr auto 486fr; align-items: center; font-size: 18px; padding: 0 17px 0 18px; }
.top-left { display: flex; gap: 55px; }
.app-name { gap: 8px; }
.tiny-fox { filter: grayscale(1); }
.tray { display: flex; gap: 17px; justify-content: flex-end; align-items: center; }

.desktop { flex: 1; min-height: 0; display: flex; }
.dock { flex: none; width: 91px; box-sizing: border-box; padding-top: 17px; overflow: hidden; background: linear-gradient(#1b0e18, #2b1623); display: flex; flex-direction: column; }
.dock-item { flex: none; height: 84px; width: 84px; margin: 1px; border-radius: 16px; justify-content: center; position: relative; }
.dock-item.active { background: #433a43; }
.dock-item.running::before { content: ""; position: absolute; left: 0; top: 38px; width: 8px; height: 8px; border-radius: 50%; background: #e95420; }
.dock hr { flex: none; width: 63px; height: 1px; margin: 12px 0 24px 12px; border: 0; background: #6d5f68; }
.dock-cut { margin-left: 19px; flex: none; }
.dock-grid { flex: none; display: grid; grid-template-columns: repeat(3, 8px); gap: 8px; margin: 23px 0 0 23px; }
.dock-grid i { width: 8px; height: 8px; border-radius: 2px; background: #f4ecf2; }

.browser { flex: 1; min-width: 0; display: flex; flex-direction: column; background: #fff; }
.tabs { flex: none; height: 57px; box-sizing: border-box; background: #ebebeb; border-bottom: 2px solid #c4c4c4; padding-top: 2px; display: flex; align-items: center; }
.pinned { width: 56px; height: 53px; box-sizing: border-box; border-right: 1px solid #c4c4c4; padding-left: 15px; }
.tab { box-sizing: border-box; width: 289px; height: 48px; margin-left: 6px; padding: 0 15px 0 11px; background: #fbfbfb; border-radius: 5px; box-shadow: 0 0 4px #999; display: flex; align-items: center; gap: 8px; color: #4e4e4e; font-size: 18px; }
.tab-title { flex: 1; white-space: nowrap; overflow: hidden; }
.plus { margin-left: 19px; }
.win { margin-left: auto; display: flex; align-items: center; gap: 16px; padding-right: 5px; }
.all-tabs { margin-right: 58px; }
.round { width: 28px; height: 28px; border-radius: 50%; background: #dadada; justify-content: center; }
.toolbar { flex: none; height: 54px; box-sizing: border-box; background: #f9f9fa; border-bottom: 1px solid #c8c8c8; display: flex; align-items: center; padding: 0 18px 0 22px; }
.nav { display: flex; gap: 28px; width: 189px; }
.urlbar { flex: 1; min-width: 0; box-sizing: border-box; height: 42px; border: 1px solid #bdbdc2; border-radius: 5px; background: #fff; display: flex; align-items: center; gap: 17px; padding: 0 9px; }
.urlbar input { flex: 1; min-width: 0; border: 0; outline: 0; padding: 0; font: 19px "Noto Sans", sans-serif; color: transparent; background: linear-gradient(90deg, #1c1c1c 80px, #8a8a8a 80px); -webkit-background-clip: text; background-clip: text; }
.extras { display: flex; align-items: center; gap: 28px; margin-left: 75px; }

.page { flex: 1; min-height: 0; position: relative; overflow: hidden; font-family: "DejaVu Sans", sans-serif; color: #111; padding: 0 8px 0 14px; display: flex; flex-direction: column; }
.logo-row { flex: none; height: 53px; overflow: hidden; display: flex; justify-content: space-between; border-bottom: 1px solid #b4b4cf; }
.logo-big { font: bold 28px "Liberation Sans", sans-serif; fill: #823539; stroke: #823539; }
.logo-small { font: bold 24px "Liberation Sans", sans-serif; fill: #3d3d3d; stroke: #3d3d3d; }
.helpers { display: flex; gap: 7px; padding: 10px 6px 0 0; }
.crumbs { flex: none; font-size: 14px; font-weight: bold; line-height: 31px; padding-left: 4px; border-bottom: 1px solid #a6a6c4; }
.columns { flex: 1; min-height: 0; display: grid; grid-template-columns: minmax(0, 478fr) minmax(0, 641fr); }
.tree { margin-top: 3px; border-right: 1px solid #a6a6c4; background: #fcfcff; position: relative; }
.expand { position: absolute; top: 1px; right: 2px; }
.tree h2 { display: flex; align-items: center; gap: 5px; font-size: 23px; line-height: 32px; padding: 20px 0 0 5px; }
.history { margin-left: 3px; }
.actions { display: flex; gap: 12px; padding: 13px 0 0 44px; color: #2e2ea8; font-size: 14px; line-height: 20px; }
.actions a { display: flex; flex-direction: column; align-items: center; gap: 8px; }
.logged { font-size: 13px; line-height: 20px; padding: 4px 0 0 37px; }
.node { display: flex; align-items: center; font-size: 17px; line-height: 22px; padding: 10px 0 0 82px; }
.node span { margin-left: 5px; }
.node b { font-size: 12px; color: #2020f0; }
.node em { color: #f22; font-size: 13px; font-weight: bold; }
.create { background: #fdfdff; padding: 8px 5px 0 8px; display: flex; flex-direction: column; min-height: 0; }
.banner { flex: none; background: #00008b; color: #e6e6fa; border: 1px solid #05051f; text-align: center; }
.banner h1 { font-size: 25px; line-height: 58px; border-bottom: 2px solid #05052f; }
.banner p { font-size: 13px; line-height: 27px; }
.create h3 { flex: none; text-align: center; font-size: 20px; font-weight: bold; line-height: 64px; white-space: nowrap; }
.templates { flex: 1; min-height: 0; position: relative; overflow: hidden; border: 1px solid #a6a6c4; border-bottom: 0; background: #f9f9fd; display: grid; grid-template-columns: 111px 243px 1fr; align-items: start; padding: 17px 0 0 18px; font-size: 17px; line-height: 22px; }
.row { display: grid; grid-template-columns: 18px 28px 1fr; column-gap: 11px; align-items: center; box-sizing: border-box; min-height: 31px; padding: 3px 0; }
.row span { margin-left: -4px; max-width: 164px; }
.list .row > span { padding-right: 20px; }
.row.tall { min-height: 50px; }
.row.tall span { align-self: start; }
.row .pic { margin: -4px 0 0; }
.row input { appearance: none; box-sizing: border-box; width: 18px; height: 18px; margin: 2px 0 0; border: 2px solid #8f8f9d; border-radius: 50%; background: #fff; }
.second { padding-top: 73px; }
.second .row > span { padding-right: 0; }
.second label.row { min-height: 40px; }
.row.off { padding: 0; }
.row.off:first-child { margin-bottom: 3px; }
.row.off svg:first-child { margin-left: -1px; }
.row.off span { padding: 4px 0 1px; color: #999; }
.row abbr { border-bottom: 1px dotted #777; }
.scribble { position: absolute; left: 110px; top: 306px; pointer-events: none; }
.scrollbar { position: absolute; right: 0; top: 35px; width: 6px; height: 420px; border-radius: 3px; background: #6f6f6f; }
.link-status { position: absolute; left: 0; bottom: 0; box-sizing: border-box; height: 24px; padding: 0 28px 0 6px; background: #f9f9fb; border: 1px solid #c4c4c8; border-width: 1px 1px 0 0; border-radius: 0 4px 0 0; font: 18px/22px "Noto Sans", sans-serif; color: #444; white-space: nowrap; }

.host-status { flex: none; height: 26px; overflow: hidden; background: #f0f0f0; display: flex; align-items: flex-start; justify-content: flex-end; gap: 4px; padding: 4px 2px 0 0; box-sizing: border-box; font: 16px/22px "Open Sans", sans-serif; color: #111; }
.grip { margin: 14px 0 0 8px; }
</style>
